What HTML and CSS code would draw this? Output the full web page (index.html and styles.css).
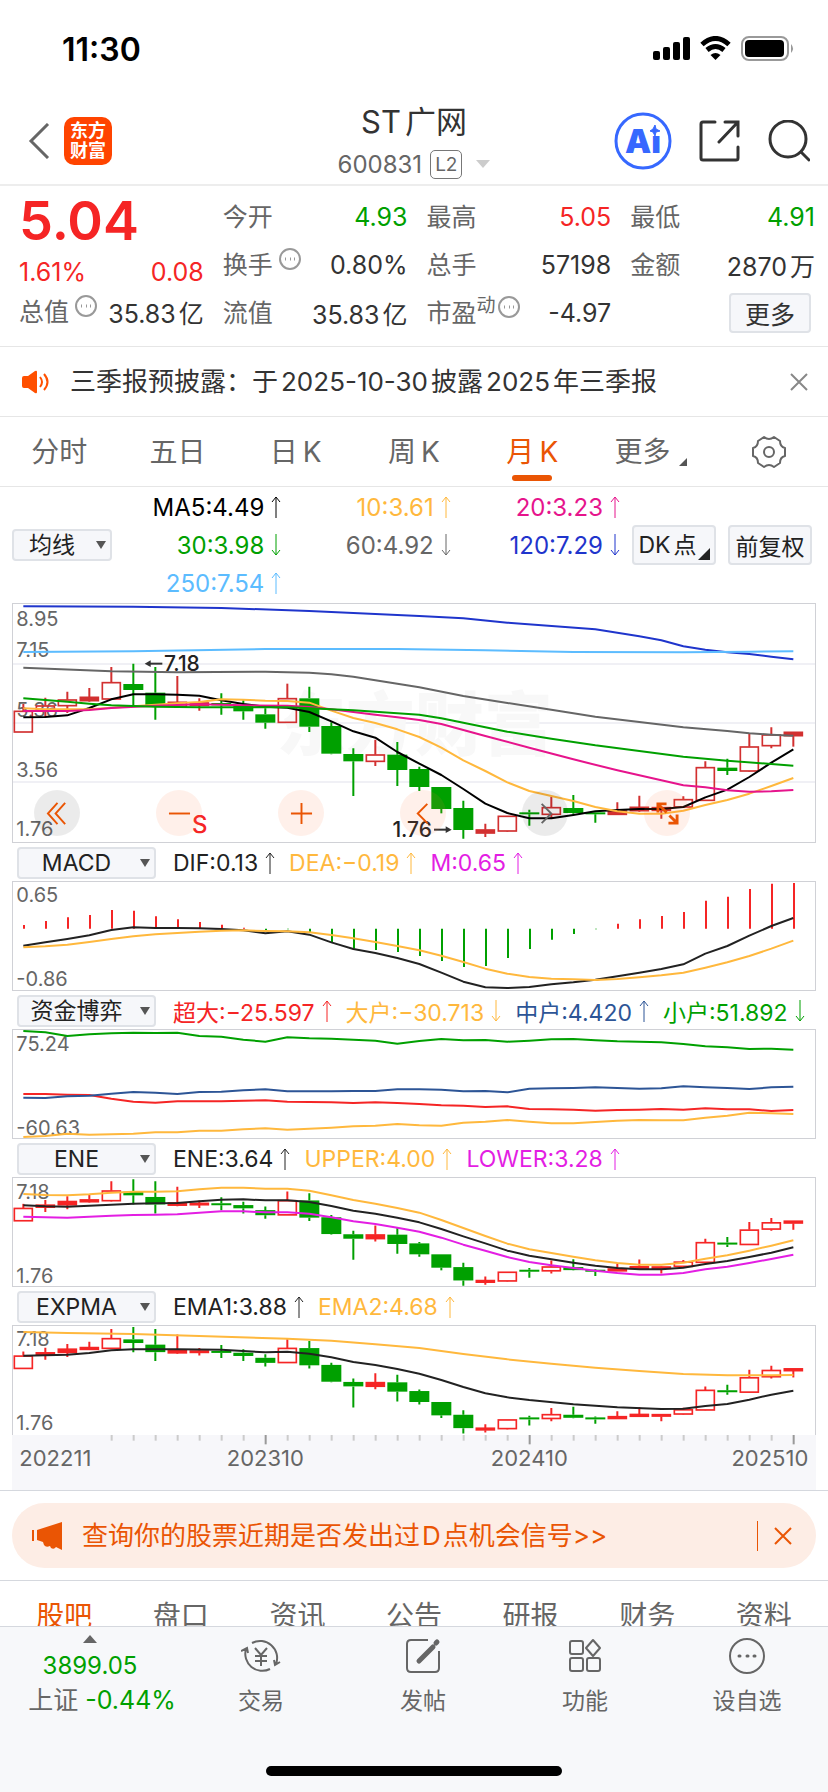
FILE: index.html
```html
<!DOCTYPE html>
<html lang="zh-CN">
<head>
  <meta charset="UTF-8" />
  <meta name="viewport" content="width=device-width, initial-scale=1.0"/>
  <title>ST广网 600831</title>
  <link rel="stylesheet" href="styles.css">
</head>
<body>

<!-- Shared icons -->
<svg class="sprite" aria-hidden="true">
  <symbol id="up" viewBox="0 0 10 22"><path d="M5 22V1M1 6l4-5 4 5" /></symbol>
  <symbol id="down" viewBox="0 0 10 22"><path d="M5 0v21M1 16l4 5 4-5" /></symbol>
  <symbol id="info" viewBox="0 0 24 24"><circle cx="12" cy="12" r="10" /><path d="M7 12h1M12 12h1M16 12h1" stroke-width="3" /></symbol>
  <symbol id="close" viewBox="0 0 18 18"><path d="M1 1l16 16M17 1L1 17" /></symbol>
</svg>

<!-- Status bar -->
<div class="status-bar">
  <span class="clock">11:30</span>
  <svg width="142" height="26" viewBox="0 0 142 26">
    <rect x="0" y="15" width="7" height="9" rx="2" /><rect x="10" y="11" width="7" height="13" rx="2" />
    <rect x="20" y="6" width="7" height="18" rx="2" /><rect x="30" y="1" width="7" height="23" rx="2" />
    <g fill="none" stroke="#000" stroke-width="5"><path d="M49 8.500Q62.500-3.500 76 8.500" /><path d="M54 14Q62.500 7 71 14" /></g>
    <path d="M57.500 19Q62.500 15 67.500 19L62.500 24Z" />
    <rect x="89" y="1" width="46" height="23" rx="7" fill="none" stroke="#999" stroke-width="2" />
    <rect x="92" y="4" width="39" height="17" rx="4" /><path d="M138 8q4 4.500 0 9z" fill="#999" />
  </svg>
</div>

<!-- Header -->
<header class="header">
  <div class="header-left">
    <button class="icon-btn" aria-label="返回"><svg width="22" height="36" viewBox="0 0 22 36"><path d="M20 1L3 18l17 17" fill="none" stroke="#666" stroke-width="3" /></svg></button>
    <a class="logo" href="#">东方<br>财富</a>
  </div>
  <div class="header-title">
    <h1>ST<i>广网</i></h1>
    <div class="code">600831<span class="level">L2</span><span class="drop"></span></div>
  </div>
  <div class="header-right">
    <button class="icon-btn" aria-label="AI">
      <svg width="58" height="58" viewBox="0 0 58 58"><circle cx="29" cy="29" r="27" fill="none" stroke="#3668ff" stroke-width="3" />
        <text x="11" y="41" class="ai">Ai</text><rect x="34" y="12" width="14" height="12" fill="#fff" />
        <path d="M41 13l1 4 4 2-4 1-1 4-2-4-3-1 3-2z" fill="#3668ff" stroke="#3668ff" /></svg>
    </button>
    <button class="icon-btn" aria-label="分享">
      <svg width="42" height="42" viewBox="0 0 42 42" fill="none" stroke="#333" stroke-width="3" stroke-linecap="round"><path d="M16 2H4Q2 2 2 4v34q0 2 2 2h33q2 0 2-2V27M26 2h13v14M39 2L20 22" /></svg>
    </button>
    <button class="icon-btn" aria-label="搜索">
      <svg width="42" height="42" viewBox="0 0 42 42" fill="none" stroke="#333" stroke-width="3" stroke-linecap="round"><circle cx="20" cy="19" r="18" /><path d="M33 32l8 8" /></svg>
    </button>
  </div>
</header>

<!-- Quote -->
<section class="quote">
  <div class="quote-main">
    <div class="price red">5.04</div>
    <div class="change red"><span>1.61%</span><span>0.08</span></div>
    <div class="cell total"><span class="key">总值<svg class="info"><use href="#info" /></svg></span><span>35.83<i>亿</i></span></div>
  </div>
  <div class="quote-grid">
    <div class="cell"><span class="key">今开</span><span class="green">4.93</span></div>
    <div class="cell"><span class="key">最高</span><span class="red">5.05</span></div>
    <div class="cell"><span class="key">最低</span><span class="green">4.91</span></div>
    <div class="cell"><span class="key">换手<svg class="info"><use href="#info" /></svg></span><span>0.80%</span></div>
    <div class="cell"><span class="key">总手</span><span>57198</span></div>
    <div class="cell"><span class="key">金额</span><span>2870<i>万</i></span></div>
    <div class="cell"><span class="key">流值</span><span>35.83<i>亿</i></span></div>
    <div class="cell"><span class="key">市盈<sup>动</sup><svg class="info"><use href="#info" /></svg></span><span>-4.97</span></div>
    <div class="cell more"><button class="box-btn">更多</button></div>
  </div>
</section>

<!-- Notice -->
<section class="notice">
  <svg width="28" height="24" viewBox="0 0 28 24" fill="#ff5000"><path d="M0 8q0-2 2-2h4L13 1q2-1 2 1v20q0 2-2 1L6 18H2q-2 0-2-2z" /><path d="M18 7q4 5 0 10M22 4q7 8 0 16" fill="none" stroke="#ff5000" stroke-width="2" /></svg>
  <a href="#">三季报预披露：于<i>2025-10-30</i>披露<i>2025</i>年三季报</a>
  <button class="icon-btn" aria-label="关闭"><svg class="close"><use href="#close" /></svg></button>
</section>

<!-- Period tabs -->
<nav class="periods">
  <button>分时</button>
  <button>五日</button>
  <button>日<i>K</i></button>
  <button>周<i>K</i></button>
  <button class="active">月<i>K</i></button>
  <button>更多<span class="corner"></span></button>
  <button aria-label="设置">
    <svg width="34" height="34" viewBox="0 0 34 34" fill="none" stroke="#666" stroke-width="2"><path d="M12 2q5 4 10 0l6 4q0 6 5 7v8q-5 1-5 7l-6 4q-5-4-10 0l-6-4q0-6-5-7v-8q5-1 5-7z" stroke-linejoin="round" /><circle cx="17" cy="17" r="5" /></svg>
  </button>
</nav>

<!-- Moving averages -->
<section class="averages">
  <label class="picker short"><select aria-label="主图指标"><option>均线</option></select></label>
  <div class="ma-grid">
    <span class="black">MA5:4.49<svg class="arrow"><use href="#up" /></svg></span>
    <span class="yellow">10:3.61<svg class="arrow"><use href="#up" /></svg></span>
    <span class="pink">20:3.23<svg class="arrow"><use href="#up" /></svg></span>
    <span class="green">30:3.98<svg class="arrow"><use href="#down" /></svg></span>
    <span class="grey">60:4.92<svg class="arrow"><use href="#down" /></svg></span>
    <span class="blue">120:7.29<svg class="arrow"><use href="#down" /></svg></span>
    <span class="sky">250:7.54<svg class="arrow"><use href="#up" /></svg></span>
  </div>
  <button class="box-btn dk">DK<i>点</i><span class="corner"></span></button>
  <button class="box-btn">前复权</button>
</section>

<!-- Charts -->
<main class="charts">
  <div class="chart">
    <svg id="kline" viewBox="39 42 2406 714"></svg>
    <div class="tools">
      <button class="muted" aria-label="最早"><svg viewBox="0 0 24 24"><path d="M12 1L2 12l10 11M20 1L10 12l10 11" /></svg></button>
      <button aria-label="缩小"><svg viewBox="0 0 24 24"><path d="M1 12h22" /></svg></button>
      <button aria-label="放大"><svg viewBox="0 0 24 24"><path d="M1 12h22M12 1v22" /></svg></button>
      <button aria-label="左移"><svg viewBox="0 0 24 24"><path d="M16 2L6 12l10 10" /></svg></button>
      <button class="muted next" aria-label="右移"><svg viewBox="0 0 24 24"><path d="M8 2l10 10L8 22" /></svg></button>
      <button aria-label="全屏"><svg viewBox="0 0 24 24"><path d="M2 11V2h9M2 2l9 9M22 13v9h-9M22 22l-8-8" stroke-width="3" /></svg></button>
    </div>
  </div>

  <div class="indicator">
    <label class="picker"><select aria-label="副图一"><option>MACD</option></select></label>
    <span class="dark">DIF:0.13<svg class="arrow"><use href="#up" /></svg></span>
    <span class="yellow">DEA:−0.19<svg class="arrow"><use href="#up" /></svg></span>
    <span class="purple">M:0.65<svg class="arrow"><use href="#up" /></svg></span>
  </div>
  <div class="chart"><svg id="macd" viewBox="39 126 2406 324"></svg></div>

  <div class="indicator">
    <label class="picker"><select aria-label="副图二"><option>资金博弈</option></select></label>
    <span class="red">超大:−25.597<svg class="arrow"><use href="#up" /></svg></span>
    <span class="yellow">大户:−30.713<svg class="arrow"><use href="#down" /></svg></span>
    <span class="navy">中户:4.420<svg class="arrow"><use href="#up" /></svg></span>
    <span class="green">小户:51.892<svg class="arrow"><use href="#down" /></svg></span>
  </div>
  <div class="chart"><svg id="funds" viewBox="39 570 2406 324"></svg></div>

  <div class="indicator">
    <label class="picker"><select aria-label="副图三"><option>ENE</option></select></label>
    <span class="dark">ENE:3.64<svg class="arrow"><use href="#up" /></svg></span>
    <span class="yellow">UPPER:4.00<svg class="arrow"><use href="#up" /></svg></span>
    <span class="purple">LOWER:3.28<svg class="arrow"><use href="#up" /></svg></span>
  </div>
  <div class="chart"><svg id="ene" viewBox="39 114 2406 324"></svg></div>

  <div class="indicator">
    <label class="picker"><select aria-label="副图四"><option>EXPMA</option></select></label>
    <span class="dark">EMA1:3.88<svg class="arrow"><use href="#up" /></svg></span>
    <span class="yellow">EMA2:4.68<svg class="arrow"><use href="#up" /></svg></span>
  </div>
  <div class="chart open"><svg id="expma" viewBox="39 559 2406 327"></svg></div>
  <svg id="axis" class="axis" viewBox="36 885 2412 165"></svg>
</main>

<!-- Signal banner -->
<section class="banner-wrap">
  <div class="banner">
    <svg width="30" height="28" viewBox="0 0 30 28" fill="#ea5504"><path d="M0 8h2v11H0zM5 8L30 0v28l-6-3q-2 3-5 1l-1-2q-4 2-6-1l-1-3-6-2z" /></svg>
    <a href="#">查询你的股票近期是否发出过<i>D</i>点机会信号&gt;&gt;</a>
    <button class="icon-btn" aria-label="关闭"><svg class="close"><use href="#close" /></svg></button>
  </div>
</section>

<!-- Content tabs -->
<nav class="content-tabs">
  <a class="active" href="#">股吧</a>
  <a href="#">盘口</a>
  <a href="#">资讯</a>
  <a href="#">公告</a>
  <a href="#">研报</a>
  <a href="#">财务</a>
  <a href="#">资料</a>
</nav>

<!-- Bottom bar -->
<footer class="bottom">
  <div class="bottom-row">
    <button class="index">
      <span class="caret"></span>
      <span class="green">3899.05</span>
      <span class="rate">上证 <b class="green">-0.44%</b></span>
    </button>
    <button class="action">
      <svg viewBox="0 0 40 36"><path d="M11 5A17 17 0 0 1 35 26M29 31A17 17 0 0 1 5 11M0 13l6-3 1 5M33 22l1 5 5-3M14 10l6 7 6-7M14 18h12M14 23h12M20 17v11" /></svg>
      交易
    </button>
    <button class="action">
      <svg viewBox="0 0 40 36"><path d="M25 2H8q-4 0-4 4v24q0 4 4 4h24q4 0 4-4V13" /><path d="M16 23l14-14M33 5l1-1" stroke-width="5" stroke-linecap="round" /></svg>
      发帖
    </button>
    <button class="action">
      <svg viewBox="0 0 40 36"><rect x="5" y="3" width="13" height="13" rx="2" /><rect x="5" y="20" width="13" height="13" rx="2" /><rect x="22" y="20" width="13" height="13" rx="2" /><path d="M28 2l7 8-7 8-7-8z" stroke-linejoin="round" /></svg>
      功能
    </button>
    <button class="action">
      <svg viewBox="0 0 40 36"><circle cx="20" cy="18" r="17" /><path d="M12 18h1M20 18h1M27 18h1" stroke-width="3" stroke-linecap="round" /></svg>
      设自选
    </button>
  </div>
  <div class="home"></div>
</footer>

<script src="charts.js"></script>
</body>
</html>
```
FILE: styles.css
```css
* {
  box-sizing: border-box;
}
body {
  margin: 0;
  font-family: Inter, "Noto Sans CJK SC", sans-serif;
  font-size: 25px;
  color: #333;
  background: #fff;
}
button, select {
  font: inherit;
  color: inherit;
  background: none;
  border: none;
  padding: 0;
  cursor: pointer;
}
a {
  color: inherit;
  text-decoration: none;
}
i {
  font-style: normal;
}
svg {
  display: block;
  flex: none;
}
.sprite { display: none; }

.red { color: #f52525; }
.green { color: #00a000; }
.black { color: #000; }
.dark { color: #222; }
.yellow { color: #ffb83d; }
.pink { color: #e6148c; }
.purple { color: #e31ee3; }
.grey { color: #666; }
.blue { color: #1f35cc; }
.navy { color: #2d5596; }
.sky { color: #5cbcff; }

.icon-btn {
  display: flex;
  align-items: center;
}
.box-btn {
  height: 40px;
  border: 2px solid #dfe2e7;
  border-radius: 4px;
  background: #f6f7fa;
  white-space: nowrap;
}

/* status bar */
.status-bar {
  display: flex;
  align-items: center;
  justify-content: space-between;
  height: 98px;
  padding: 0 33px 0 62px;
  color: #000;
}
.clock {
  font-size: 32px;
  font-weight: 600;
}

/* header */
.header {
  display: grid;
  grid-template-columns: 1fr auto 1fr;
  align-items: center;
  height: 88px;
  padding: 0 18px;
  border-bottom: 2px solid #ededed;
}
.header-left {
  display: flex;
  align-items: center;
  gap: 14px;
  padding-left: 10px;
}
.logo {
  width: 48px;
  height: 48px;
  padding-top: 4px;
  border-radius: 10px;
  background: #ff4400;
  color: #fff;
  font-size: 18px;
  font-weight: 700;
  line-height: 20px;
  text-align: center;
}
.header-title {
  text-align: center;
}
h1 {
  margin: 0 0 4px;
  font-size: 31px;
  font-weight: 400;
  line-height: 42px;
}
h1 i {
  margin-left: 4px;
}
.code {
  display: flex;
  align-items: center;
  justify-content: center;
  height: 34px;
  color: #666;
  font-size: 24px;
}
.level {
  margin: 0 14px 0 8px;
  padding: 0 4px;
  border: 1px solid #777;
  border-radius: 5px;
  font-size: 19px;
  line-height: 27px;
}
.drop {
  border: 7px solid transparent;
  border-top: 8px solid #ccc;
  border-bottom: none;
}
.header-right {
  display: flex;
  align-items: center;
  justify-content: flex-end;
  gap: 27px;
}
.ai {
  fill: #3668ff;
  font-size: 33px;
  font-weight: 900;
}

/* quote */
.quote {
  display: grid;
  grid-template-columns: repeat(4, 1fr);
  gap: 19px;
  padding: 7px 13px 9px 19px;
  border-bottom: 1px solid #e6e6e6;
}
.quote-main, .quote-grid {
  min-width: 0;
}
.quote-grid {
  grid-column: span 3;
  display: grid;
  grid-template-columns: repeat(3, 1fr);
  grid-auto-rows: 48px;
  column-gap: 19px;
}
.price {
  font-size: 54px;
  font-weight: 600;
  line-height: 56px;
}
.change {
  display: flex;
  justify-content: space-between;
  line-height: 46px;
}
.cell {
  display: flex;
  align-items: center;
  justify-content: space-between;
  white-space: nowrap;
}
.total {
  height: 34px;
}
.cell i {
  margin-left: 3px;
}
.key {
  display: flex;
  color: #666;
  line-height: 36px;
}
.key sup {
  font-size: 19px;
  line-height: 22px;
}
.info {
  width: 24px;
  height: 24px;
  margin-left: 5px;
  fill: none;
  stroke: #999;
  stroke-width: 2;
}
sup + .info {
  margin-left: 1px;
}
.more {
  justify-content: flex-end;
  padding-right: 4px;
}
.more .box-btn {
  width: 82px;
}

/* notice */
.notice {
  display: flex;
  align-items: center;
  height: 70px;
  padding: 0 20px 0 22px;
  border-bottom: 1px solid #e6e6e6;
  font-size: 26px;
}
.notice a {
  flex: 1;
  margin-left: 20px;
  line-height: 30px;
}
.notice i {
  margin: 0 3px;
}
.close {
  width: 18px;
  height: 18px;
  stroke: #888;
  stroke-width: 2;
}

/* period tabs */
.periods {
  display: grid;
  grid-template-columns: repeat(7, 1fr);
  height: 70px;
  border-bottom: 1px solid #e6e6e6;
}
.periods button {
  position: relative;
  display: flex;
  align-items: center;
  justify-content: center;
  color: #666;
  font-size: 28px;
  line-height: 30px;
}
.periods i {
  margin-left: 5px;
}
.periods .active {
  color: #ea5504;
}
.periods .active::after {
  content: "";
  position: absolute;
  bottom: 5px;
  width: 40px;
  height: 6px;
  border-radius: 3px;
  background: #ea5504;
}
.corner {
  align-self: flex-end;
  border: 4px solid #555;
  border-top-color: transparent;
  border-left-color: transparent;
}
.periods .corner {
  margin: 0 0 20px 8px;
}

/* moving averages */
.averages {
  display: flex;
  align-items: center;
  height: 116px;
  padding: 0 16px 0 12px;
  font-size: 24px;
}
.ma-grid {
  flex: 1;
  display: grid;
  grid-template-columns: repeat(3, 1fr);
  grid-auto-rows: 38px;
}
.ma-grid span, .indicator span {
  display: flex;
  align-items: center;
  justify-content: flex-end;
  gap: 7px;
  white-space: nowrap;
}
.arrow {
  width: 10px;
  height: 22px;
  fill: none;
  stroke: currentColor;
  stroke-width: 1;
}
.averages .box-btn {
  width: 84px;
  margin-left: 12px;
  color: #222;
  font-size: 23px;
}
.averages .dk {
  display: flex;
  align-items: center;
  justify-content: center;
  line-height: 30px;
}
.dk i {
  margin-left: 3px;
}
.dk .corner {
  margin: 0 0 3px 1px;
  border-width: 6px;
  border-right-color: #222;
  border-bottom-color: #222;
}
.picker {
  position: relative;
  width: 139px;
}
.picker.short {
  width: 100px;
}
.picker select {
  appearance: none;
  width: 100%;
  height: 32px;
  padding-right: 20px;
  border: 2px solid #dfe2e7;
  border-radius: 4px;
  background: #f6f7fa;
  color: #222;
  font-size: 23px;
  line-height: 28px;
  text-align: center;
  text-align-last: center;
}
.picker::after {
  content: "";
  position: absolute;
  right: 6px;
  top: 12px;
  border: 5px solid transparent;
  border-top: 8px solid #555;
  border-bottom: none;
  pointer-events: none;
}

/* charts */
.charts {
  padding: 0 12px;
}
.indicator {
  display: flex;
  align-items: center;
  gap: 14px;
  height: 38px;
  padding: 1px 0 0 5px;
  font-size: 23px;
}
.indicator .picker {
  margin-right: 3px;
}
.chart {
  position: relative;
  border: 1px solid #d0d1d6;
}
.chart.open {
  border-bottom: none;
}
.chart svg, .axis {
  width: 100%;
  overflow: visible;
}
.axis {
  background: #f7f7fa;
}
.tools {
  position: absolute;
  left: 21px;
  right: 125px;
  bottom: 6px;
  display: flex;
  justify-content: space-between;
}
.tools button {
  display: flex;
  align-items: center;
  justify-content: center;
  width: 46px;
  height: 46px;
  border-radius: 50%;
  background: rgba(255, 120, 60, 0.11);
}
.tools .muted {
  background: rgba(0, 0, 0, 0.08);
}
.tools svg {
  width: 23px;
  height: 23px;
  fill: none;
  stroke: #ea5504;
  stroke-width: 2;
}
.tools .next svg {
  stroke: #666;
}

/* text inside the charts, 3 units to a pixel */
.scale { fill: #666; font-size: 60px; }
.note { fill: #222; font-size: 63px; font-weight: 500; }
.sell { fill: #f52525; font-size: 72px; font-weight: 500; }
.date { fill: #666; font-size: 66px; }
.watermark { fill: #f8f8f8; font-size: 207px; font-weight: 900; }

/* banner */
.banner-wrap {
  padding: 12px;
  border-top: 1px solid #d5d8de;
  border-bottom: 1px solid #d5d8de;
}
.banner {
  display: flex;
  align-items: center;
  height: 65px;
  padding: 0 24px 0 20px;
  border-radius: 33px;
  background: #fdede5;
  color: #ea5504;
  font-size: 26px;
}
.banner a {
  flex: 1;
  margin-left: 20px;
  line-height: 30px;
}
.banner i {
  margin: 0 2px;
}
.banner .icon-btn {
  height: 30px;
  padding-left: 16px;
  border-left: 1px solid #ea5504;
}
.banner .close {
  stroke: #ea5504;
}

/* content tabs */
.content-tabs {
  display: grid;
  grid-template-columns: repeat(7, 1fr);
  padding: 0 6px;
  color: #666;
  font-size: 28px;
  line-height: 70px;
  text-align: center;
}
.content-tabs .active {
  color: #ea5504;
}

/* bottom bar */
.bottom {
  position: fixed;
  left: 0;
  right: 0;
  bottom: 0;
  padding-bottom: 16px;
  border-top: 1px solid #d5d8de;
  background: #f7f8fa;
}
.bottom-row {
  display: grid;
  grid-template-columns: 180px repeat(4, 1fr);
  height: 139px;
  color: #666;
}
.index, .action {
  display: flex;
  flex-direction: column;
  align-items: center;
}
.index {
  padding-top: 8px;
  font-size: 24px;
  line-height: 35px;
  white-space: nowrap;
}
.rate {
  padding-left: 24px;
  font-size: 25px;
}
.index b {
  font-weight: 400;
}
.caret {
  margin-bottom: 5px;
  border: 7px solid transparent;
  border-top: none;
  border-bottom: 8px solid #666;
}
.action {
  gap: 10px;
  padding-top: 11px;
  font-size: 23px;
  line-height: 34px;
}
.action svg {
  width: 40px;
  height: 36px;
  fill: none;
  stroke: #666;
  stroke-width: 2;
}
.home {
  width: 296px;
  height: 10px;
  margin: 0 auto;
  border-radius: 5px;
  background: #000;
}
```
FILE: charts.js
```js
// All charts share one x grid, 3 units to a pixel: 36 months, 66 units apart.
const STEP = 66;
const FIRST = 70;
const x = i => FIRST + i * STEP;

const RED = '#f52525', GREEN = '#00a000', YELLOW = '#ffb83d', BLACK = '#222', PURPLE = '#e31ee3';

// [up, body top, body bottom, high, low]
const candles = [
  [1,363,427,342,427], [1,347,360,323,382], [1,329,348,305,369], [1,321,333,294,335],
  [1,277,328,231,330], [0,282,300,221,345], [0,308,345,231,389], [1,336,350,258,354],
  [1,338,347,325,362], [0,339,346,310,374], [0,348,364,331,389], [0,373,398,355,416],
  [1,325,398,281,398], [0,325,410,290,426], [0,408,491,397,493], [0,492,514,475,618],
  [1,494,515,449,528], [0,494,540,456,588], [0,537,591,530,603], [0,591,657,591,670],
  [0,654,720,632,746], [1,719,730,701,741], [1,678,724,678,726], [0,667,672,659,707],
  [1,652,674,621,686], [0,654,669,615,671], [0,667,673,663,698], [1,662,674,637,675],
  [1,651,663,617,665], [1,652,662,650,686], [1,628,652,619,654], [1,532,632,514,633],
  [0,533,543,506,555], [1,470,544,432,545], [1,434,468,412,475], [1,426,438,426,470]
];

// a list of y values, one a month
function line(values, color) {
  return path(values.map((y, i) => [i, y]), color);
}

// a list of [month, y] pairs
function path(points, color) {
  const d = points.map(([i, y]) => x(i) + ',' + y).join(' ');
  return `<polyline points="${d}" fill="none" stroke="${color}" stroke-width="6" stroke-linejoin="round" />`;
}

function drawCandles(scale, offset, red) {
  const ty = y => offset + (y - 221) * scale;
  return candles.map(([up, top, bottom, high, low], i) => {
    const cx = x(i), t = ty(top), h = Math.max(ty(bottom) - t, 6), color = up ? red : GREEN;
    const wick = `<path d="M${cx} ${ty(high)}V${t}M${cx} ${t + h}V${ty(low)}" stroke="${color}" stroke-width="6" />`;
    if (up) {
      return wick + `<rect x="${cx - 27}" y="${t + 1}" width="54" height="${h - 2}" fill="${h < 13 ? color : 'none'}" stroke="${color}" stroke-width="5" />`;
    }
    return wick + `<rect x="${cx - 30}" y="${t}" width="60" height="${h}" fill="${color}" />`;
  }).join('');
}

function label(text, px, py, cls, anchor) {
  return `<text x="${px}" y="${py}" class="${cls}" text-anchor="${anchor || 'start'}">${text}</text>`;
}

function draw(id, parts) {
  document.getElementById(id).innerHTML = parts.join('');
}

draw('kline', [
  '<path d="M39 222H2445M39 399H2445M39 576H2445" stroke="#f0f0f5" stroke-width="6" />',
  label('东方财富', 830, 480, 'watermark'),
  label('8.95', 49, 108, 'scale'), label('7.15', 49, 201, 'scale'), label('5.36', 49, 381, 'scale'),
  label('3.56', 49, 560, 'scale'), label('1.76', 49, 737, 'scale'),
  drawCandles(1, 221, '#d23030'),
  path([[0,49],[5,50],[9,54],[13,63],[18,78],[20,85],[22,98],[26,118],[28,139],[29,151],[30,169],[31,179],[32,187],[33,192],[34,200],[35,208]], '#1f35cc'),
  path([[0,186],[5,184],[11,177],[17,177],[21,181],[25,186],[30,187],[33,185],[35,184]], '#5cbcff'),
  path([[0,233],[4,244],[7,247],[11,245],[13,248],[14,253],[15,260],[16,271],[17,281],[18,292],[20,318],[22,339],[24,359],[26,380],[28,396],[30,412],[32,423],[33,430],[34,434],[35,437]], '#666'),
  line([382,381,376,354,328,313,313,314,317,331,342,350,353,366,394,424,443,486,521,555,597,641,669,685,685,675,664,660,657,657,651,622,599,561,518,478], '#000'),
  path([[0,355],[1,358],[3,358],[5,349],[7,340],[8,336],[9,328],[10,329],[11,332],[12,333],[13,338],[14,362],[15,384],[16,399],[17,418],[18,441],[19,473],[20,511],[21,543],[22,577],[23,603],[24,618],[25,633],[26,651],[27,664],[28,671],[29,671],[30,662],[31,645],[32,630],[33,611],[34,588],[35,564]], YELLOW),
  path([[0,363],[2,363],[3,360],[4,354],[6,347],[8,343],[10,346],[12,347],[13,351],[14,358],[15,366],[16,374],[17,382],[18,390],[19,402],[21,438],[23,473],[25,508],[27,541],[29,571],[30,586],[31,592],[32,601],[33,605],[34,604],[35,600]], '#e6148c'),
  path([[0,325],[1,330],[2,335],[3,341],[4,346],[6,350],[8,352],[12,352],[13,355],[15,361],[17,370],[18,374],[19,385],[20,398],[22,425],[24,446],[26,466],[28,483],[30,500],[32,512],[34,522],[35,527]], GREEN),
  '<path d="M487 221H450" stroke="#333" stroke-width="6" /><path d="M434 221l18-10v20z" fill="#333" />',
  label('7.18', 492, 243, 'note'),
  '<path d="M1302 719h38" stroke="#333" stroke-width="6" /><path d="M1355 719l-18-10v20z" fill="#333" />',
  label('1.76', 1296, 741, 'note', 'end'),
  label('S', 576, 730, 'sell')
]);

const bars = [255,243,232,225,210,212,229,238,246,254,263,273,268,277,308,326,330,336,348,363,381,378,354,327,299,282,268,251,238,228,216,182,170,147,131,129];
draw('macd', [
  label('0.65', 49, 187, 'scale'), label('-0.86', 49, 439, 'scale'),
  bars.map((y, i) => `<path d="M${x(i) + 2} 266V${y}" stroke="${y < 266 ? RED : GREEN}" stroke-width="6" />`).join(''),
  line([317,307,297,286,270,262,264,264,265,267,271,280,274,284,307,327,339,354,372,398,425,442,444,441,433,427,419,409,398,387,373,341,318,287,258,234], BLACK),
  line([322,319,314,306,297,289,283,279,275,272,271,273,274,277,285,295,306,318,331,347,366,386,401,411,416,418,420,417,412,406,398,383,367,348,326,302], YELLOW)
]);

draw('funds', [
  label('75.24', 49, 632, 'scale'), label('-60.63', 49, 884, 'scale'),
  line([573,577,588,583,580,578,579,578,588,590,599,605,592,595,596,599,602,611,603,597,601,600,605,602,598,597,601,604,605,607,612,619,622,627,626,629], GREEN),
  line([762,762,764,765,776,785,788,784,784,784,782,781,785,786,787,789,787,789,792,796,797,801,799,807,808,809,812,810,809,807,809,805,808,808,813,810], RED),
  line([773,774,769,767,761,756,758,762,756,755,751,748,754,754,754,753,753,748,748,749,754,753,757,746,745,744,742,744,746,745,739,742,744,747,742,740], '#2d5596'),
  line([891,888,881,884,883,881,877,877,872,872,868,865,869,866,863,859,857,852,856,857,848,845,840,845,850,850,846,842,840,841,841,833,827,818,820,822], YELLOW)
]);

draw('ene', [
  label('7.18', 49, 176, 'scale'), label('1.76', 49, 428, 'scale'),
  drawCandles(0.608, 118, RED),
  line([162,165,166,163,158,155,155,154,148,143,143,146,146,152,166,180,191,204,218,240,264,288,311,328,339,350,361,369,374,374,368,356,346,332,317,301], YELLOW),
  line([196,199,200,197,194,191,190,189,184,179,178,181,181,186,198,212,221,233,247,267,289,310,332,347,358,368,377,384,388,388,383,372,363,351,338,322], BLACK),
  line([230,232,233,230,227,225,224,223,218,214,214,217,217,221,232,244,252,263,275,293,314,332,351,366,376,384,392,399,404,404,399,388,380,369,357,344], PURPLE)
]);

draw('expma', [
  label('7.18', 49, 620, 'scale'), label('1.76', 49, 872, 'scale'),
  drawCandles(0.608, 562, RED),
  path([[0,577],[2,580],[5,583],[8,589],[12,597],[14,603],[16,614],[18,625],[20,643],[22,659],[24,672],[26,684],[28,694],[30,703],[32,707],[34,707],[35,706]], YELLOW),
  path([[0,648],[2,645],[3,640],[4,632],[5,629],[7,629],[9,630],[11,638],[12,636],[13,642],[14,653],[15,667],[16,676],[17,688],[18,702],[19,721],[20,742],[21,761],[22,773],[23,781],[25,794],[27,803],[29,808],[30,807],[31,799],[32,793],[33,780],[34,765],[35,753]], BLACK)
]);

// a tick every month, a longer one where a date stands
const ticks = [];
for (let i = 4; i < 36; i++) {
  const major = i % 12 === 11;
  ticks.push(`<path d="M${x(i) + 1} 885v${major ? 28 : 17}" stroke="${major ? '#999' : '#ccc'}" stroke-width="6" />`);
}
draw('axis', [
  ticks.join(''),
  label('202211', 58, 978, 'date'), label('202310', x(11), 978, 'date', 'middle'),
  label('202410', x(23), 978, 'date', 'middle'), label('202510', 2425, 978, 'date', 'end')
]);
```
